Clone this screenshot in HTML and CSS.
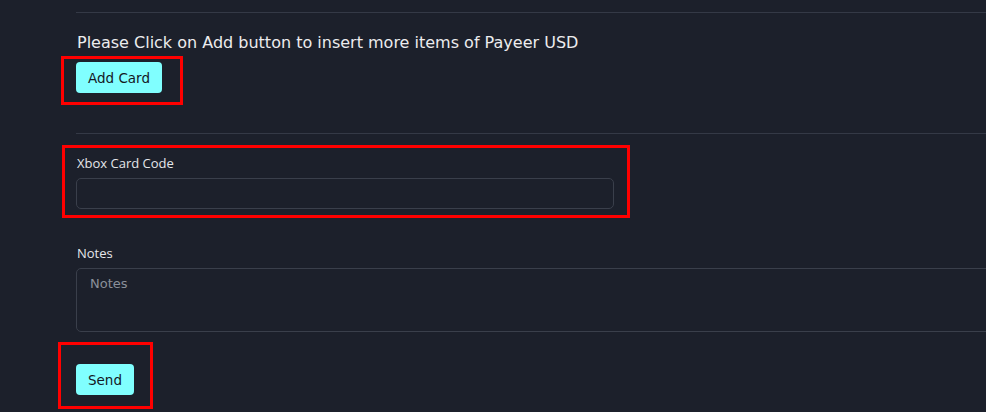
FILE: index.html
```html
<!DOCTYPE html>
<html>
<head>
<meta charset="utf-8">
<link rel="stylesheet" href="styles.css">
</head>
<body>
<main class="form">
  <hr class="divider">
  <section class="add-section">
    <p class="hint">Please Click on Add button to insert more items of Payeer USD</p>
    <div class="mark-wrap">
      <button class="btn">Add Card</button>
      <span class="mark mark-add"></span>
    </div>
  </section>
  <hr class="divider">
  <div class="field mark-wrap">
    <label class="label">Xbox Card Code</label>
    <input class="input" type="text">
    <span class="mark mark-code"></span>
  </div>
  <div class="field notes-field">
    <label class="label">Notes</label>
    <textarea class="textarea" placeholder="Notes"></textarea>
  </div>
  <div class="mark-wrap send-wrap">
    <button class="btn">Send</button>
    <span class="mark mark-send"></span>
  </div>
</main>
</body>
</html>
```

FILE: styles.css
```css
html, body {
  margin: 0;
  padding: 0;
  background: #1c202b;
  height: 100%;
  overflow: hidden;
}
.form {
  padding-left: 76px;
  padding-top: 12px;
  font-family: "DejaVu Sans", sans-serif;
  color: #e8e8ea;
}
.divider {
  border: 0;
  border-top: 1px solid #343946;
  margin: 0;
  height: 0;
}
.add-section {
  padding-top: 20px;
  height: 120px;
  box-sizing: border-box;
}
.hint {
  margin: 0;
  font-size: 16px;
  line-height: 20px;
  padding-left: 1px;
  color: #ececee;
}
.mark-wrap {
  position: relative;
}
.add-section .mark-wrap {
  margin-top: 9px;
  width: 86px;
}
.btn {
  display: block;
  background: #80ffff;
  color: #15181f;
  border: 0;
  border-radius: 4px;
  font-family: "DejaVu Sans", sans-serif;
  font-size: 13.5px;
  height: 31px;
  padding: 0 12px;
  cursor: pointer;
}
.add-section .btn {
  width: 86px;
  padding: 0;
}
.mark {
  position: absolute;
  border: 3px solid #ff0000;
  pointer-events: none;
}
.mark-add {
  left: -15px;
  top: -6px;
  width: 116px;
  height: 43px;
}
.field {
  width: 538px;
  display: flex;
  flex-direction: column;
}
.field.mark-wrap {
  margin-top: 21px;
}
.label {
  font-family: "Open Sans", sans-serif;
  font-size: 13px;
  line-height: 16px;
  color: #e4e6ea;
  margin-left: 1px;
  margin-bottom: 7px;
}
.input {
  height: 31px;
  box-sizing: border-box;
  background: #1c202b;
  border: 1px solid #3a3f4b;
  border-radius: 5px;
  outline: none;
}
.mark-code {
  left: -14px;
  top: -10px;
  width: 562px;
  height: 67px;
}
.notes-field {
  width: auto;
  margin-top: 36px;
  margin-right: -20px;
}
.textarea {
  height: 64px;
  box-sizing: border-box;
  background: #1c202b;
  border: 1px solid #3a3f4b;
  border-radius: 5px;
  resize: none;
  padding: 7px 13px;
  font-family: "DejaVu Sans", sans-serif;
  font-size: 13px;
  color: #e8e8ea;
  outline: none;
}
.textarea::placeholder {
  color: #8a8f99;
}
.send-wrap {
  margin-top: 32px;
  width: 58px;
}
.send-wrap .btn {
  width: 58px;
  padding: 0;
}
.mark-send {
  left: -18px;
  top: -22px;
  width: 89px;
  height: 61px;
}
```
